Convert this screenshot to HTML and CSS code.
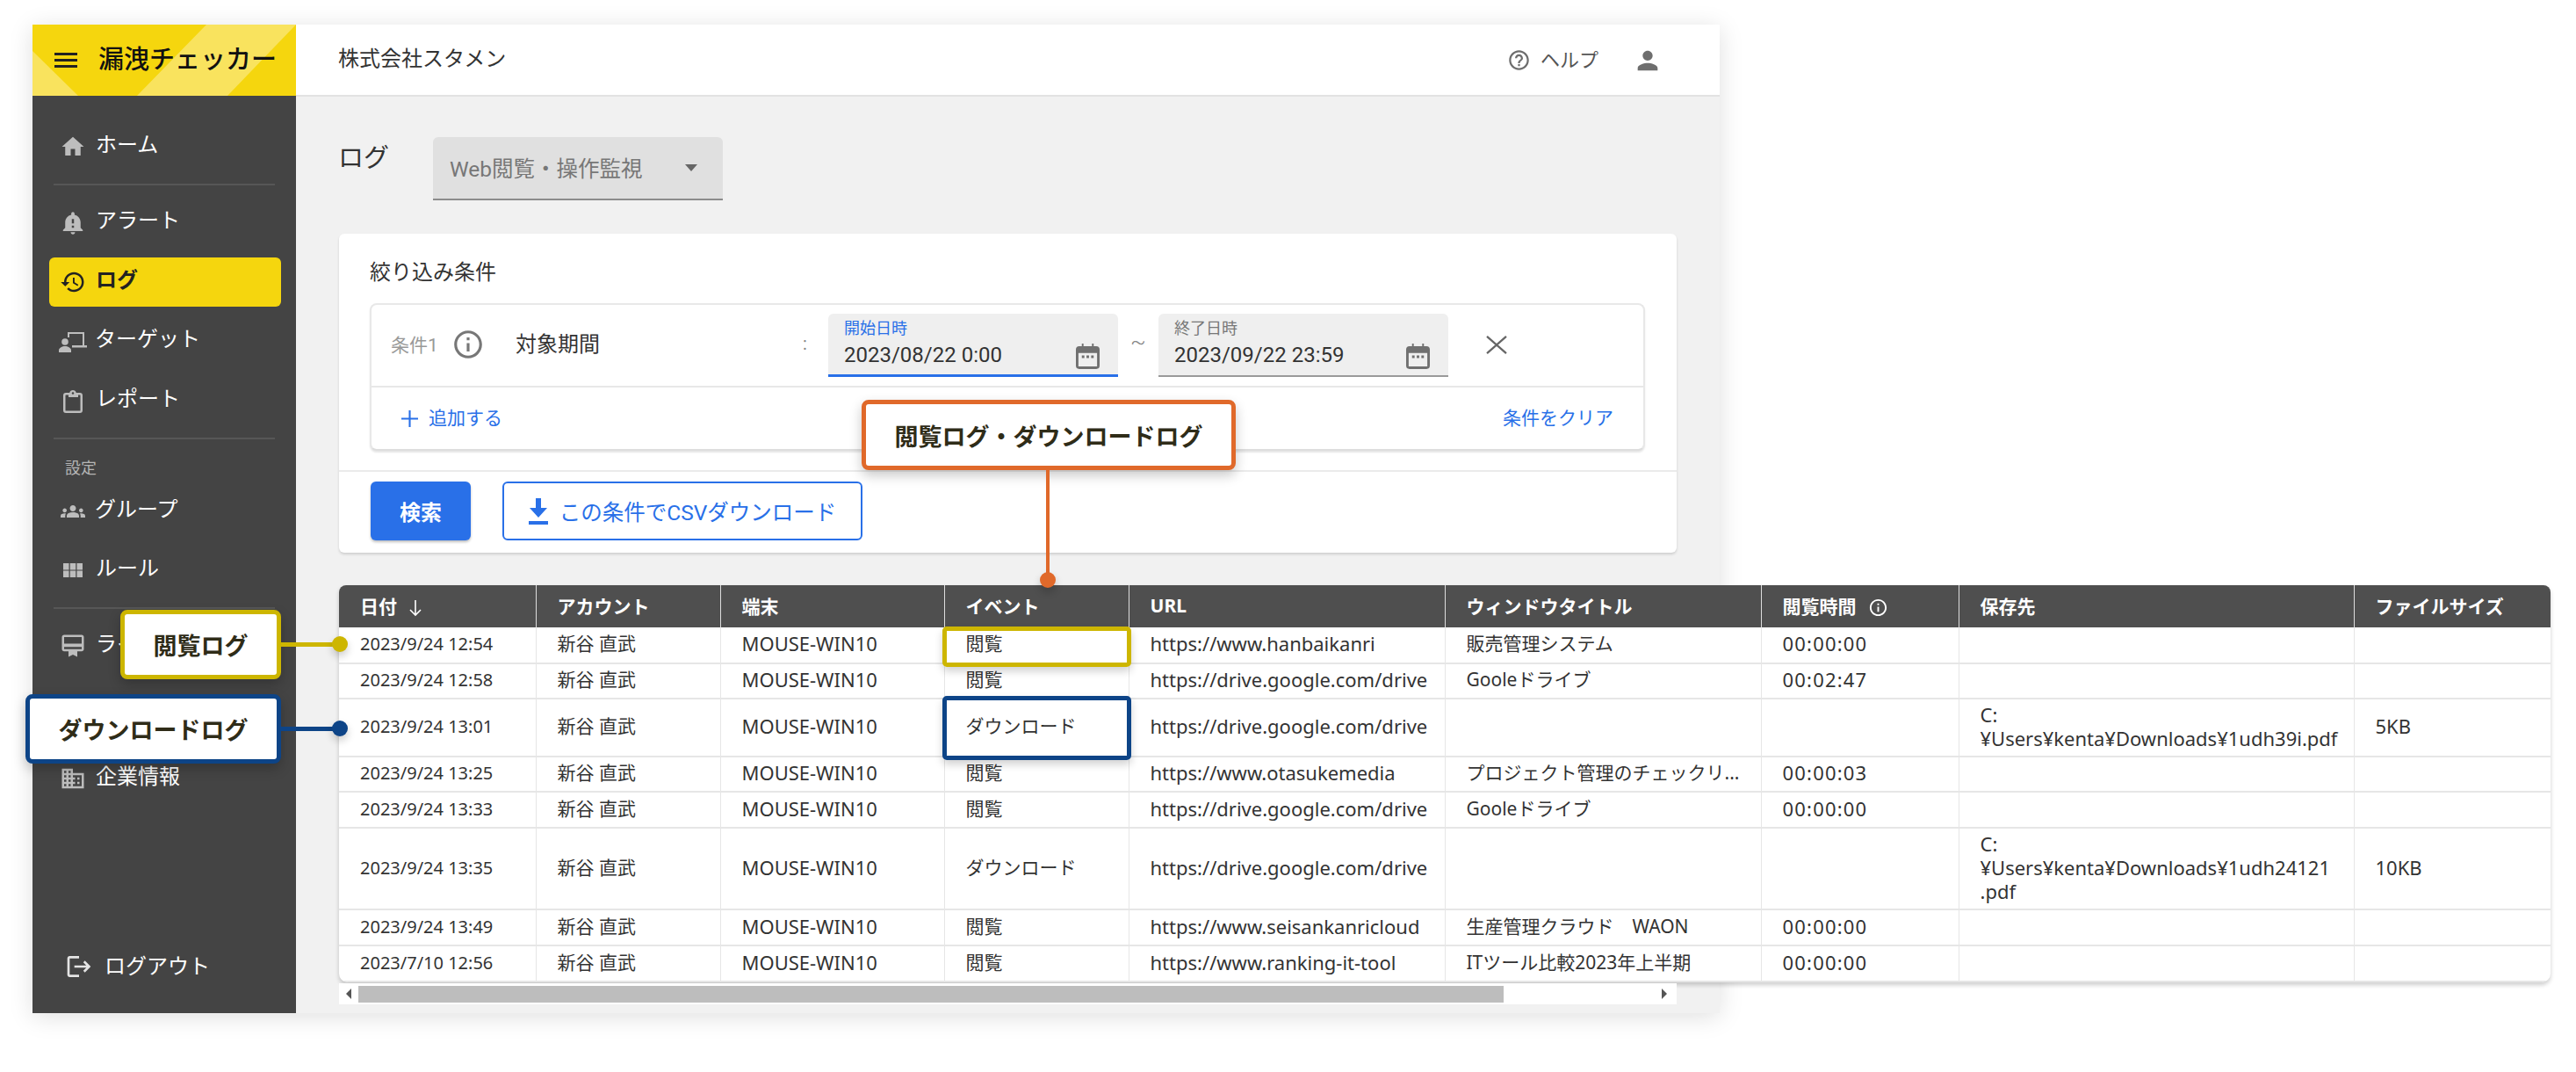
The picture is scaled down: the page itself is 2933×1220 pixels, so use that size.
FILE: index.html
```html
<!DOCTYPE html>
<html lang="ja">
<head>
<meta charset="utf-8">
<title>漏洩チェッカー ログ</title>
<link rel="stylesheet" href="styles.css">
</head>
<body>
<div class="window">
  <aside class="sidebar">
    <header class="brand">
      <svg class="brand-bg" viewBox="0 0 300 81" preserveAspectRatio="none"><path fill="#f9e35e" d="M0 30L52 81H0zM198 0H300L222 81H119z"/></svg>
      <svg class="brand-menu" viewBox="0 0 26 17"><path fill="#222" d="M0 0h26v3H0zM0 7h26v3H0zM0 14h26v3H0z"/></svg>
      <span class="brand-name">漏洩チェッカー</span>
    </header>
    <nav class="nav">
      <a class="nav-item"><svg class="nav-icon" viewBox="0 0 24 24"><path d="M10 20v-6h4v6h5v-8h3L12 3 2 12h3v8z"/></svg><span class="nav-label">ホーム</span></a>
      <div class="nav-rule"></div>
      <a class="nav-item"><svg class="nav-icon" viewBox="0 0 24 24"><path d="M12 23c1.100 0 1.990-.89 1.990-2h-3.980c0 1.110.89 2 1.990 2zm7-6v-5c0-3.350-2.360-6.150-5.500-6.830V4c0-.83-.67-1.500-1.500-1.500s-1.500.67-1.500 1.500v1.170C7.360 5.850 5 8.650 5 12v5l-2 2v1h18v-1l-2-2zm-6 0h-2v-2h2v2zm0-4h-2V9h2v4z"/></svg><span class="nav-label">アラート</span></a>
      <a class="nav-item is-active"><svg class="nav-icon" viewBox="0 0 24 24"><path d="M13 3c-4.970 0-9 4.030-9 9H1l3.890 3.890.07.14L9 12H6c0-3.870 3.130-7 7-7s7 3.130 7 7-3.130 7-7 7c-1.930 0-3.680-.79-4.940-2.060l-1.420 1.420C8.270 19.990 10.510 21 13 21c4.970 0 9-4.030 9-9s-4.030-9-9-9zm-1 5v5l4.280 2.540.72-1.210-3.500-2.080V8H12z"/></svg><span class="nav-label">ログ</span></a>
      <a class="nav-item"><svg class="nav-icon icon-target" viewBox="0 0 32 23"><path d="M10 0h19v15h3v2.500H15V15h12V2H12v4h-2z"/><circle cx="7" cy="11" r="3.800"/><path d="M0 23v-2.500C0 18 4 16 7 16s7 2 7 4.500V23z"/></svg><span class="nav-label">ターゲット</span></a>
      <a class="nav-item"><svg class="nav-icon icon-clip" viewBox="0 0 22 26"><path d="M3 3h4.200C7.600 1.300 9.100 0 11 0s3.400 1.300 3.800 3H19a3 3 0 0 1 3 3v17a3 3 0 0 1-3 3H3a3 3 0 0 1-3-3V6a3 3 0 0 1 3-3zm0 2.500a.5.5 0 0 0-.5.5v17a.5.5 0 0 0 .5.5h16a.5.5 0 0 0 .5-.5V6a.5.5 0 0 0-.5-.5h-2V8h-11V5.500zM11 2.200a1.300 1.300 0 1 0 0 2.600 1.300 1.300 0 0 0 0-2.600z"/></svg><span class="nav-label">レポート</span></a>
      <div class="nav-rule"></div>
      <div class="nav-heading">設定</div>
      <a class="nav-item"><svg class="nav-icon nav-icon-wide" viewBox="0 0 24 24"><path d="M12 12.750c1.630 0 3.070.39 4.240.9 1.080.48 1.760 1.560 1.760 2.730V18H6v-1.610c0-1.180.68-2.260 1.760-2.730 1.170-.52 2.610-.91 4.240-.91zM4 13c1.100 0 2-.9 2-2s-.9-2-2-2-2 .9-2 2 .9 2 2 2zm1.130 1.100C4.760 14.040 4.390 14 4 14c-.99 0-1.930.21-2.780.58C.48 14.900 0 15.620 0 16.430V18h4.500v-1.610c0-.83.23-1.610.63-2.290zM20 13c1.100 0 2-.9 2-2s-.9-2-2-2-2 .9-2 2 .9 2 2 2zm4 3.430c0-.81-.48-1.530-1.220-1.850C21.930 14.210 20.990 14 20 14c-.39 0-.76.04-1.130.1.4.68.63 1.460.63 2.290V18H24v-1.570zM12 6c1.660 0 3 1.340 3 3s-1.340 3-3 3-3-1.340-3-3 1.340-3 3-3z"/></svg><span class="nav-label">グループ</span></a>
      <a class="nav-item"><svg class="nav-icon icon-grid" viewBox="0 0 22 16"><path d="M0 0h6.500v7.500H0zM7.750 0h6.500v7.500h-6.500zM15.500 0H22v7.500h-6.500zM0 8.500h6.500V16H0zM7.750 8.500h6.500V16h-6.500zM15.500 8.500H22V16h-6.500z"/></svg><span class="nav-label">ルール</span></a>
      <div class="nav-rule"></div>
      <a class="nav-item"><svg class="nav-icon" viewBox="0 0 24 24"><path d="M20 2H4c-1.110 0-2 .89-2 2v11c0 1.110.89 2 2 2h4v5l4-2 4 2v-5h4c1.110 0 2-.89 2-2V4c0-1.110-.89-2-2-2zm0 13H4v-2h16v2zm0-5H4V4h16v6z"/></svg><span class="nav-label">ライセンス</span></a>
      <a class="nav-item nav-item-spaced"><svg class="nav-icon" viewBox="0 0 24 24"><path d="M12 12c2.210 0 4-1.790 4-4s-1.790-4-4-4-4 1.790-4 4 1.790 4 4 4zm0 2c-2.670 0-8 1.340-8 4v2h16v-2c0-2.660-5.330-4-8-4z"/></svg><span class="nav-label">ユーザー情報</span></a>
      <a class="nav-item nav-item-spaced"><svg class="nav-icon" viewBox="0 0 24 24"><path d="M12 7V3H2v18h20V7H12zM6 19H4v-2h2v2zm0-4H4v-2h2v2zm0-4H4V9h2v2zm0-4H4V5h2v2zm4 12H8v-2h2v2zm0-4H8v-2h2v2zm0-4H8V9h2v2zm0-4H8V5h2v2zm10 12h-8v-2h2v-2h-2v-2h2v-2h-2V9h8v10zm-2-8h-2v2h2v-2zm0 4h-2v2h2v-2z"/></svg><span class="nav-label">企業情報</span></a>
      <a class="nav-item nav-logout"><svg class="nav-icon logout-icon" viewBox="0 0 24 24"><path d="M17 7l-1.410 1.410L18.170 11H8v2h10.170l-2.580 2.580L17 17l5-5zM4 5h8V3H4c-1.100 0-2 .9-2 2v14c0 1.100.9 2 2 2h8v-2H4V5z"/></svg><span class="nav-label">ログアウト</span></a>
    </nav>
  </aside>

  <div class="main">
    <header class="topbar">
      <span class="company">株式会社スタメン</span>
      <div class="topbar-actions">
        <svg class="top-icon" viewBox="0 0 24 24"><path d="M11 18h2v-2h-2v2zm1-16C6.480 2 2 6.480 2 12s4.480 10 10 10 10-4.480 10-10S17.520 2 12 2zm0 18c-4.410 0-8-3.590-8-8s3.590-8 8-8 8 3.590 8 8-3.590 8-8 8zm0-14c-2.210 0-4 1.790-4 4h2c0-1.100.9-2 2-2s2 .9 2 2c0 2-3 1.750-3 5h2c0-2.250 3-2.500 3-5 0-2.210-1.790-4-4-4z"/></svg>
        <span class="help-label">ヘルプ</span>
        <svg class="top-icon user-icon" viewBox="0 0 24 24"><path d="M12 12c2.210 0 4-1.790 4-4s-1.790-4-4-4-4 1.790-4 4 1.790 4 4 4zm0 2c-2.670 0-8 1.340-8 4v2h16v-2c0-2.660-5.330-4-8-4z"/></svg>
      </div>
    </header>

    <main class="content">
      <div class="title-row">
        <h1 class="page-title">ログ</h1>
        <div class="select"><span class="select-text">Web閲覧・操作監視</span><svg class="select-arrow" viewBox="0 0 14 8"><path d="M0 0h14L7 8z"/></svg></div>
      </div>

      <section class="card">
        <div class="card-body">
          <h2 class="card-title">絞り込み条件</h2>
          <div class="cond-box">
            <div class="cond-row">
              <span class="cond-num">条件1</span>
              <svg class="cond-info" viewBox="0 0 24 24"><path d="M11 7h2v2h-2zm0 4h2v6h-2zm1-9C6.480 2 2 6.480 2 12s4.480 10 10 10 10-4.480 10-10S17.520 2 12 2zm0 18c-4.410 0-8-3.590-8-8s3.590-8 8-8 8 3.590 8 8-3.590 8-8 8z"/></svg>
              <span class="cond-name">対象期間</span>
              <span class="cond-colon">:</span>
              <div class="date-field is-focus">
                <span class="date-label">開始日時</span>
                <span class="date-value">2023/08/22 0:00</span>
                <svg class="cal" viewBox="0 0 28 30"><path d="M4 3h3V0h2v3h10V0h2v3h3a4 4 0 0 1 4 4v19a4 4 0 0 1-4 4H4a4 4 0 0 1-4-4V7a4 4 0 0 1 4-4zm-1 8v16h22V11zM7 14h3v3H7zm5.500 0h3v3h-3zM18 14h3v3h-3z"/></svg>
              </div>
              <span class="tilde">~</span>
              <div class="date-field">
                <span class="date-label">終了日時</span>
                <span class="date-value">2023/09/22 23:59</span>
                <svg class="cal" viewBox="0 0 28 30"><path d="M4 3h3V0h2v3h10V0h2v3h3a4 4 0 0 1 4 4v19a4 4 0 0 1-4 4H4a4 4 0 0 1-4-4V7a4 4 0 0 1 4-4zm-1 8v16h22V11zM7 14h3v3H7zm5.500 0h3v3h-3zM18 14h3v3h-3z"/></svg>
              </div>
              <svg class="cond-close" viewBox="0 0 25 22"><path d="M1 1l23 20M24 1L1 21"/></svg>
            </div>
            <div class="cond-foot">
              <a class="link add-link"><svg class="add-icon" viewBox="0 0 18 18"><path d="M8 0h2v8h8v2h-8v8H8v-8H0V8h8z"/></svg>追加する</a>
              <a class="link">条件をクリア</a>
            </div>
          </div>
        </div>
        <div class="card-foot">
          <button class="btn btn-primary" type="button">検索</button>
          <button class="btn btn-outline" type="button"><svg class="dl-icon" viewBox="0 0 22 30"><path d="M8 0h6v11h7L11 22 1 11h7zM0 26h22v4H0z"/></svg>この条件でCSVダウンロード</button>
        </div>
      </section>

      <div class="table-wrap">
        <table class="log-table">
          <colgroup><col class="c1"><col class="c2"><col class="c3"><col class="c4"><col class="c5"><col class="c6"><col class="c7"><col class="c8"><col class="c9"></colgroup>
          <thead>
            <tr>
              <th>日付<svg class="sort" viewBox="0 0 16 24"><path d="M8 3v17M2 14l6 6 6-6"/></svg></th>
              <th>アカウント</th><th>端末</th><th>イベント</th><th>URL</th><th>ウィンドウタイトル</th>
              <th>閲覧時間<svg class="th-info" viewBox="0 0 24 24"><path d="M11 7h2v2h-2zm0 4h2v6h-2zm1-9C6.480 2 2 6.480 2 12s4.480 10 10 10 10-4.480 10-10S17.520 2 12 2zm0 18c-4.410 0-8-3.590-8-8s3.590-8 8-8 8 3.590 8 8-3.590 8-8 8z"/></svg></th>
              <th>保存先</th><th>ファイルサイズ</th>
            </tr>
          </thead>
          <tbody>
            <tr class="r"><td>2023/9/24 12:54</td><td class="ja">新谷 直武</td><td>MOUSE-WIN10</td><td class="ja">閲覧</td><td>https://www.hanbaikanri</td><td class="ja">販売管理システム</td><td class="time">00:00:00</td><td></td><td></td></tr>
            <tr class="r"><td>2023/9/24 12:58</td><td class="ja">新谷 直武</td><td>MOUSE-WIN10</td><td class="ja">閲覧</td><td>https://drive.google.com/drive</td><td class="ja">Gooleドライブ</td><td class="time">00:02:47</td><td></td><td></td></tr>
            <tr class="r2"><td>2023/9/24 13:01</td><td class="ja">新谷 直武</td><td>MOUSE-WIN10</td><td class="ja">ダウンロード</td><td>https://drive.google.com/drive</td><td></td><td></td><td>C:<br>¥Users¥kenta¥Downloads¥1udh39i.pdf</td><td>5KB</td></tr>
            <tr class="r"><td>2023/9/24 13:25</td><td class="ja">新谷 直武</td><td>MOUSE-WIN10</td><td class="ja">閲覧</td><td>https://www.otasukemedia</td><td class="ja">プロジェクト管理のチェックリ...</td><td class="time">00:00:03</td><td></td><td></td></tr>
            <tr class="r"><td>2023/9/24 13:33</td><td class="ja">新谷 直武</td><td>MOUSE-WIN10</td><td class="ja">閲覧</td><td>https://drive.google.com/drive</td><td class="ja">Gooleドライブ</td><td class="time">00:00:00</td><td></td><td></td></tr>
            <tr class="r3"><td>2023/9/24 13:35</td><td class="ja">新谷 直武</td><td>MOUSE-WIN10</td><td class="ja">ダウンロード</td><td>https://drive.google.com/drive</td><td></td><td></td><td>C:<br>¥Users¥kenta¥Downloads¥1udh24121<br>.pdf</td><td>10KB</td></tr>
            <tr class="r"><td>2023/9/24 13:49</td><td class="ja">新谷 直武</td><td>MOUSE-WIN10</td><td class="ja">閲覧</td><td>https://www.seisankanricloud</td><td class="ja">生産管理クラウド　WAON</td><td class="time">00:00:00</td><td></td><td></td></tr>
            <tr class="r"><td>2023/7/10 12:56</td><td class="ja">新谷 直武</td><td>MOUSE-WIN10</td><td class="ja">閲覧</td><td>https://www.ranking-it-tool</td><td class="ja">ITツール比較2023年上半期</td><td class="time">00:00:00</td><td></td><td></td></tr>
          </tbody>
        </table>
      </div>
      <div class="hscroll">
        <svg class="hs-arrow" viewBox="0 0 6 12"><path d="M6 0v12L0 6z"/></svg>
        <div class="hs-thumb"></div>
        <svg class="hs-arrow hs-right" viewBox="0 0 6 12"><path d="M0 0v12l6-6z"/></svg>
      </div>
    </main>
  </div>
</div>

<div class="callout callout-yellow">閲覧ログ</div>
<div class="wire wire-yellow"></div>
<div class="dot dot-yellow"></div>
<div class="callout callout-blue">ダウンロードログ</div>
<div class="wire wire-blue"></div>
<div class="dot dot-blue"></div>
<div class="callout callout-orange">閲覧ログ・ダウンロードログ</div>
<div class="wire wire-orange"></div>
<div class="dot dot-orange"></div>
<div class="mark mark-yellow"></div>
<div class="mark mark-blue"></div>
</body>
</html>
```

FILE: styles.css
```css
* { box-sizing: border-box; }
html, body { margin: 0; height: 100%; }
body {
  position: relative;
  width: 2933px;
  height: 1220px;
  overflow: hidden;
  padding: 28px 0 0 37px;
  background: #fff;
  font-family: Roboto, "Noto Sans CJK JP", sans-serif;
  color: #333;
}

.window {
  display: flex;
  width: 1921px;
  height: 1125px;
  background: #f1f1f1;
  box-shadow: 0 4px 26px rgba(0, 0, 0, .13);
}

/* sidebar */
.sidebar {
  display: flex;
  flex-direction: column;
  flex: 0 0 300px;
  background: #444;
}
.brand {
  position: relative;
  display: flex;
  align-items: center;
  flex: 0 0 81px;
  padding-left: 25px;
  background: #f5d60e;
}
.brand-bg { position: absolute; inset: 0; width: 100%; height: 100%; }
.brand-menu { position: relative; width: 26px; height: 17px; margin-top: -1px; }
.brand-name {
  position: relative;
  margin-left: 24px;
  margin-top: -1px;
  font-size: 29px;
  line-height: 40px;
  font-weight: 500;
  color: #111;
  white-space: nowrap;
}
.nav {
  display: flex;
  flex-direction: column;
  flex: 1;
  gap: 11.5px;
  padding: 30px 17px 25px 19px;
}
.nav-item {
  display: flex;
  align-items: center;
  flex: 0 0 56px;
  padding-left: 12px;
  border-radius: 6px;
  color: #fff;
  font-size: 24px;
}
.nav-item-spaced { margin-top: 8px; }
.nav-icon {
  flex: 0 0 30px;
  width: 30px;
  height: 30px;
  margin-right: 11px;
  fill: #bdbdbd;
}
.nav-icon-wide { flex-basis: 32px; width: 32px; height: 28px; margin: 0 9px 0 -1px; }
.icon-target { flex-basis: 32px; width: 32px; height: 23px; margin: 2px 9px 0 -1px; }
.icon-clip { flex-basis: 22px; width: 22px; height: 26px; margin: 2px 15px 0 4px; }
.icon-grid { flex-basis: 22px; width: 22px; height: 16px; margin: 0 15px 0 4px; }
.nav-label { margin-bottom: 4px; line-height: 34px; white-space: nowrap; }
.nav-rule {
  height: 2px;
  margin: 2.5px 7px 2.5px 5px;
  background: #575757;
}
.nav-heading {
  margin: 6px 0 -3.5px 18px;
  font-size: 18px;
  line-height: 26px;
  color: #b5b5b5;
}
.is-active {
  background: #f5d60e;
  color: #222;
  font-weight: 700;
}
.is-active .nav-icon { fill: #222; }
.nav-logout { margin-top: auto; padding-left: 18px; }
.logout-icon { fill: #e4e4e4; width: 32px; flex-basis: 32px; height: 32px; margin-right: 13px; }
.nav-logout .nav-label { margin-bottom: 1px; }

/* top bar */
.main { display: flex; flex-direction: column; flex: 1; min-width: 0; }
.topbar {
  display: flex;
  align-items: center;
  justify-content: space-between;
  flex: 0 0 82px;
  padding: 0 65px 0 48px;
  background: #fff;
  border-bottom: 2px solid #e2e2e2;
}
.company { font-size: 24px; line-height: 34px; margin-top: -2px; color: #333; white-space: nowrap; }
.topbar-actions { display: flex; align-items: center; }
.top-icon { width: 27px; height: 27px; fill: #6e6e6e; }
.help-label { margin: -5px 0 0 11px; font-size: 22px; color: #555; }
.user-icon { width: 34px; height: 34px; margin: 2px 0 0 39px; }

/* content */
.content { flex: 1; padding: 46px 49px 0; }
.title-row { display: flex; align-items: flex-start; height: 73px; }
.page-title {
  margin: 2px 0 0 -1px;
  width: 108px;
  font-size: 29px;
  line-height: 44px;
  font-weight: 400;
  color: #333;
}
.select {
  display: flex;
  align-items: center;
  justify-content: space-between;
  width: 330px;
  height: 72px;
  padding: 0 29px 0 19px;
  background: #e0e0e0;
  border-bottom: 2px solid #8c8c8c;
  border-radius: 6px 6px 0 0;
  color: #777;
  font-size: 24.5px;
}
.select-text { margin-top: -2px; }
.select-arrow { width: 14px; height: 8px; fill: #666; }

.card {
  height: 363px;
  margin-top: 37px;
  background: #fff;
  border-radius: 6px;
  box-shadow: 0 2px 3px rgba(0, 0, 0, .14);
}
.card-body { height: 271px; padding: 0 36px 0 35px; border-bottom: 2px solid #ebebeb; }
.card-title {
  margin: 0;
  padding-top: 27px;
  font-size: 24px;
  line-height: 34px;
  font-weight: 400;
  color: #333;
  height: 79px;
}
.cond-box {
  height: 168px;
  background: #fff;
  border: 2px solid #e8e8e8;
  border-bottom-color: #ddd;
  border-radius: 8px;
  box-shadow: 0 2px 2px rgba(0, 0, 0, .1);
}
.cond-row {
  display: flex;
  align-items: center;
  height: 94px;
  padding-left: 22px;
  border-bottom: 2px solid #e8e8e8;
}
.cond-num { width: 69px; margin-top: -5px; font-size: 21px; color: #999; }
.cond-info { width: 38px; height: 38px; flex: none; fill: #777; margin-right: 35px; margin-top: -2px; }
.cond-name { width: 327px; margin-top: -8px; font-size: 24px; color: #333; }
.cond-colon { width: 29px; margin-top: -4px; font-size: 20px; color: #888; }
.date-field {
  position: relative;
  display: flex;
  flex-direction: column;
  flex: 0 0 330px;
  height: 72px;
  padding: 5px 0 0 18px;
  background: #efefef;
  border-bottom: 2px solid #9a9a9a;
  border-radius: 6px 6px 0 0;
}
.is-focus { border-bottom: 3px solid #2970e8; }
.date-label { font-size: 18px; line-height: 24px; color: #777; }
.is-focus .date-label { color: #2970e8; }
.date-value { font-size: 24px; line-height: 34px; margin-top: 1px; color: #333; white-space: nowrap; }
.cal { position: absolute; right: 21px; top: 34px; width: 27px; height: 29px; fill: #707070; }
.tilde { flex: 0 0 46px; text-align: center; font-size: 26px; color: #888; margin-top: -8px; font-weight: 300; }
.cond-close { flex: none; width: 24px; height: 21px; margin: -2px 0 0 43px; fill: none; stroke: #666; stroke-width: 2.4; }
.cond-foot {
  display: flex;
  align-items: center;
  justify-content: space-between;
  height: 70px;
  padding: 0 34px 4px 34px;
}
.link { display: flex; align-items: center; font-size: 21px; color: #2970e8; white-space: nowrap; }
.add-icon { width: 19px; height: 19px; margin-right: 12px; margin-top: 4px; fill: #2970e8; }
.card-foot { display: flex; gap: 36px; padding: 11px 0 0 36px; }
.btn {
  display: flex;
  align-items: center;
  justify-content: center;
  height: 67px;
  font-family: inherit;
  font-size: 24.5px;
  border-radius: 6px;
  cursor: pointer;
}
.btn-primary {
  width: 114px;
  background: #2970e8;
  border: 0;
  color: #fff;
  font-size: 24px;
  font-weight: 700;
  box-shadow: 0 2px 3px rgba(0, 0, 0, .25);
}
.btn-outline {
  width: 410px;
  background: #fff;
  border: 2px solid #2970e8;
  color: #2970e8;
}
.dl-icon { width: 22px; height: 30px; margin-right: 13px; fill: #2970e8; }

/* table */
.table-wrap {
  width: 2518px;
  margin-top: 37px;
  background: #fff;
  border-radius: 8px 8px 10px 10px;
  overflow: hidden;
  box-shadow: 0 3px 5px rgba(0, 0, 0, .2);
}
.log-table {
  width: 2518px;
  table-layout: fixed;
  border-collapse: collapse;
  font-family: "Noto Sans", "Noto Sans CJK JP", sans-serif;
  font-size: 22px;
  color: #333;
}
.c1 { width: 224px; } .c2 { width: 210px; } .c3 { width: 255px; } .c4 { width: 210px; } .c5 { width: 360px; }
.c6 { width: 360px; } .c7 { width: 225px; } .c8 { width: 450px; } .c9 { width: 224px; }
.log-table th {
  height: 48px;
  padding: 0 0 2px 24px;
  background: #4f4f4f;
  border-left: 1px solid #ddd;
  color: #fff;
  font-size: 21px;
  font-weight: 700;
  text-align: left;
  white-space: nowrap;
}
.log-table th:first-child, .log-table td:first-child { border-left: 0; }
.log-table td {
  padding: 0 0 2px 24px;
  border-left: 1px solid #e6e6e6;
  border-bottom: 2px solid #e6e6e6;
  line-height: 27px;
  white-space: nowrap;
}
.log-table td:first-child { font-size: 20px; }
.log-table .ja { font-size: 21px; }
.log-table .time { letter-spacing: 1.2px; }
.r td { height: 40.6px; }
.r2 td { height: 65.5px; }
.r3 td { height: 93.6px; }
.sort { width: 16px; height: 24px; margin: 0 0 -6px 13px; fill: none; stroke: #fff; stroke-width: 1.6; }
.th-info { width: 23px; height: 23px; margin: 0 0 -5px 13px; fill: #fff; }
.hscroll {
  position: relative;
  display: flex;
  align-items: center;
  width: 1523px;
  height: 24px;
  margin-top: 1px;
  padding: 2px 0 1px 22px;
  background: #fff;
}
.hs-thumb { width: 1304px; height: 19px; background: #bdbdbd; }
.hs-arrow { position: absolute; left: 8px; top: 6px; width: 6px; height: 12px; fill: #555; }
.hs-right { left: auto; right: 11px; }

/* annotations, laid over the screenshot */
.callout {
  position: absolute;
  display: flex;
  align-items: center;
  justify-content: center;
  background: #fff;
  border: 5px solid;
  border-radius: 8px;
  font-size: 27px;
  font-weight: 700;
  color: #2f2c18;
  box-shadow: 0 6px 14px rgba(0, 0, 0, .22);
  white-space: nowrap;
}
.callout-yellow { left: 137px; top: 694px; width: 183px; height: 79px; border-color: #cdb600; }
.callout-blue { left: 29px; top: 790px; width: 291px; height: 79px; border-color: #0d4487; }
.callout-orange { left: 981px; top: 455px; width: 426px; height: 80px; border-color: #e0692a; }
.wire { position: absolute; }
.wire-yellow { left: 320px; top: 731px; width: 60px; height: 5px; background: #cdb600; }
.wire-blue { left: 320px; top: 827px; width: 60px; height: 5px; background: #0d4487; }
.wire-orange { left: 1191px; top: 535px; width: 4px; height: 120px; background: #e0692a; }
.dot { position: absolute; width: 18px; height: 18px; border-radius: 50%; box-shadow: 0 5px 10px rgba(0, 0, 0, .2); }
.dot-yellow { left: 378px; top: 724px; background: #cdb600; }
.dot-blue { left: 378px; top: 820px; background: #0d4487; }
.dot-orange { left: 1184px; top: 651px; background: #e0692a; }
.mark { position: absolute; left: 1073px; width: 215px; border: 5px solid; border-radius: 5px; box-shadow: 0 5px 10px rgba(0, 0, 0, .18); }
.mark-yellow { top: 713px; height: 46px; border-color: #cdb600; }
.mark-blue { top: 792px; height: 73px; border-color: #0d4487; }
```
